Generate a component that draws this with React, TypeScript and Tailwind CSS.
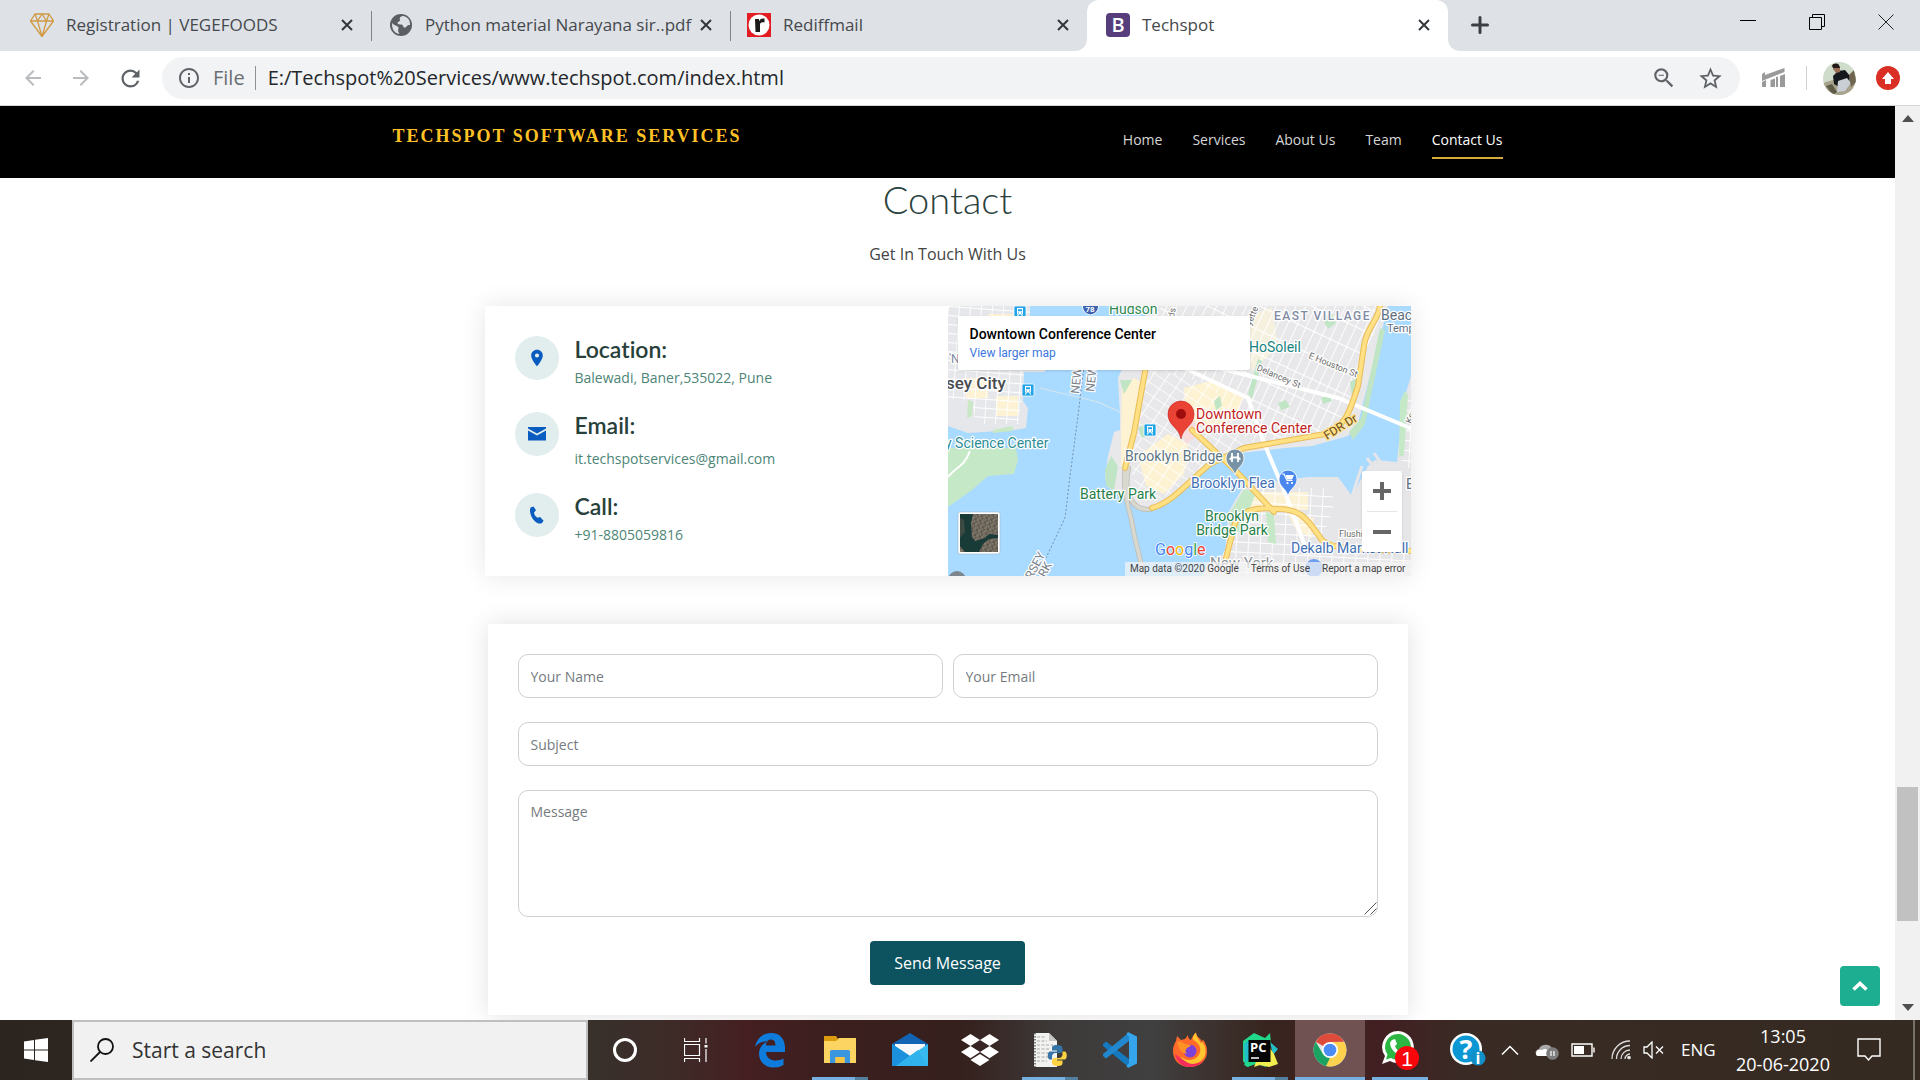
import type { ReactNode } from "react";
import {
  MdArrowBack,
  MdArrowForward,
  MdRefresh,
  MdInfoOutline,
  MdZoomOut,
  MdStarBorder,
  MdLocationOn,
} from "react-icons/md";
import { FaDropbox } from "react-icons/fa";

/* ---------- Browser chrome ---------- */

function DiamondIcon() {
  return (
    <svg viewBox="0 0 24 24" className="size-6 shrink-0" fill="none" stroke="#d09a45" strokeWidth="1.3" strokeLinejoin="round">
      <path d="M5 1h14l4.500 7L12 23.500.5 8z" />
      <path d="M.5 8h23M5 1l2.500 7L12 23.500 16.500 8 19 1M7.500 8 12 1l4.500 7" />
    </svg>
  );
}

function GlobeIcon() {
  return (
    <svg viewBox="0 0 24 24" className="size-6 shrink-0">
      <circle cx="12" cy="12" r="11" fill="#5b5f64" />
      <path d="M14 3c-3 .5-4 2-3 4 1 1.500-2 1-2.500 3 0 1.500 2 1.500 4 1.500 2.500.5 1 3 3 3 2.500 0 2-3 5.500-2.500C21.500 7 18 3.500 14 3zM3.200 10c2 2.500 4.500 2.500 6 4 1 1.500-.5 2.500 0 4.500.5 1 1 1.500 1.200 2.500C5 20.500 2.500 15 3.200 10z" fill="#dee1e6" />
    </svg>
  );
}

function RediffIcon() {
  return (
    <svg viewBox="0 0 24 24" className="size-6 shrink-0">
      <rect width="24" height="24" fill="#e31b23" />
      <circle cx="12" cy="12" r="10.500" fill="#fff" />
      <path d="M8 6h4v2.500C13 6 14.500 5 17.500 5.500v4C14 9 13 10 13 12v7H8.500z" fill="#1a1a1a" />
    </svg>
  );
}

function BootstrapIcon() {
  return (
    <span className="flex size-6 shrink-0 items-center justify-center rounded-[4px] bg-[#563d7c] text-[20px] font-semibold leading-6 text-white">
      B
    </span>
  );
}

function CloseIcon() {
  return (
    <svg viewBox="0 0 12 12" className="size-3" fill="none" stroke="#33373b" strokeWidth="2">
      <path d="M1 1l10 10M11 1L1 11" />
    </svg>
  );
}

function Tab({ icon, title, className, active = false }: { icon: ReactNode; title: string; className: string; active?: boolean }) {
  return (
    <div
      className={`relative flex h-full items-center pb-[2px] pr-3 ${className} ${active ? "rounded-t-xl bg-white pl-[19px]" : ""}`}
    >
      {icon}
      <button className="min-w-0 flex-1 truncate pl-3 text-left text-[17px] leading-6 text-[#45494d]">{title}</button>
      <button aria-label={`Close ${title}`} className="flex size-6 shrink-0 items-center justify-center">
        <CloseIcon />
      </button>
      {active && (
        <>
          <span className="absolute bottom-0 -left-3 size-3 bg-white">
            <span className="block size-3 rounded-br-xl bg-[#dee1e6]" />
          </span>
          <span className="absolute -right-3 bottom-0 size-3 bg-white">
            <span className="block size-3 rounded-bl-xl bg-[#dee1e6]" />
          </span>
        </>
      )}
    </div>
  );
}

function TabStrip() {
  return (
    <div className="flex h-[51px] shrink-0 items-center bg-[#dee1e6]">
      <Tab className="w-[371px] pl-[30px]" icon={<DiamondIcon />} title="Registration | VEGEFOODS" />
      <span className="h-[30px] w-px bg-[#808387]" />
      <Tab className="w-[358px] pl-[17px]" icon={<GlobeIcon />} title="Python material Narayana sir..pdf" />
      <span className="h-[30px] w-px bg-[#808387]" />
      <Tab className="w-[356px] pl-4" icon={<RediffIcon />} title="Rediffmail" />
      <Tab className="w-[361px]" icon={<BootstrapIcon />} title="Techspot" active />
      <button aria-label="New tab" className="ml-5 flex size-6 items-center justify-center pb-px">
        <svg viewBox="0 0 18 18" className="size-[18px]" stroke="#3c4043" strokeWidth="3" strokeLinecap="round">
          <path d="M9 1.500v15M1.500 9h15" />
        </svg>
      </button>
      <div className="ml-auto flex h-11 items-center self-start">
        <button aria-label="Minimize" className="flex w-[69px] justify-center">
          <svg viewBox="0 0 16 16" className="size-4" stroke="#000"><path d="M0 6.500h16" /></svg>
        </button>
        <button aria-label="Restore" className="flex w-[69px] justify-center">
          <svg viewBox="0 0 16 16" className="size-4" stroke="#000" fill="none">
            <path d="M.5 3.500h12v12H.5zM3.500 3V.5h12v12H13" />
          </svg>
        </button>
        <button aria-label="Close window" className="flex w-[69px] justify-center">
          <svg viewBox="0 0 16 16" className="size-4" stroke="#222"><path d="M.5.5l15 15M15.500.5l-15 15" /></svg>
        </button>
      </div>
    </div>
  );
}

function Avatar() {
  return (
    <svg viewBox="0 0 33 33" className="size-[33px]">
      <defs>
        <clipPath id="avatar"><circle cx="16.500" cy="16.500" r="16.500" /></clipPath>
      </defs>
      <g clipPath="url(#avatar)">
        <rect width="33" height="33" fill="#cfdccb" />
        <path d="M0 21l10-3 8 5 15-9v19H0z" fill="#a9a38d" />
        <path d="M10 14l5-5 7-1 5 6-1 8-8 4-7-4z" fill="#15181c" />
        <path d="M10 4l4-2 3 3 0 5-4 1-3-4z" fill="#9a6f56" />
        <path d="M9 4c1-3 5-3 7-1l1 3-7 0z" fill="#221a18" />
        <path d="M15 19l9-3 4 5-6 8-8 1z" fill="#c9cfd4" />
        <path d="M26 13l5-5 2 12-5 5z" fill="#6e6450" />
        <path d="M3 24l6-2 5 8-4 3z" fill="#5f5c47" />
      </g>
    </svg>
  );
}

function Toolbar() {
  return (
    <div className="flex h-[55px] shrink-0 items-center border-b border-[#d4d6d9] bg-white pl-[21px] pr-5">
      <div className="flex gap-6 pr-[18px] text-[#b9bbbe]">
        <button aria-label="Back"><MdArrowBack className="size-6" /></button>
        <button aria-label="Forward"><MdArrowForward className="size-6" /></button>
        <button aria-label="Reload" className="text-[#5f6368]"><MdRefresh className="size-[27px]" /></button>
      </div>
      <div className="flex h-[42px] min-w-0 flex-1 items-center rounded-full bg-[#f1f3f4] pl-[15px] pr-4 text-[20px]">
        <MdInfoOutline className="size-6 shrink-0 text-[#5f6368]" />
        <span className="pl-3 pr-[10px] text-[#6b6f73]">File</span>
        <span className="h-6 w-px bg-[#8d9094]" />
        <input
          aria-label="Address"
          defaultValue="E:/Techspot%20Services/www.techspot.com/index.html"
          className="min-w-0 flex-1 bg-transparent pl-3 text-[#24272b] outline-none"
        />
        <button aria-label="Zoom" className="text-[#5f6368]"><MdZoomOut className="size-[26px]" /></button>
        <button aria-label="Bookmark" className="ml-5 text-[#5f6368]"><MdStarBorder className="size-[27px]" /></button>
      </div>
      <button aria-label="Extension" className="ml-[22px]">
        <svg viewBox="0 0 24 20" className="h-5 w-6" fill="#9a9a9a">
          <path d="M0 6L3 4v3L22.500 0v4L0 13z" />
          <path d="M0 14l4-2v7H0zM8.500 12l4.500-1.500V19H8.500zM18 8l5-2v13h-5zM14 9l2-.5V19h-2z" />
        </svg>
      </button>
      <span className="ml-5 h-6 w-px bg-[#cfd1d4]" />
      <button aria-label="Profile" className="ml-4"><Avatar /></button>
      <button aria-label="Update available" className="ml-5">
        <svg viewBox="0 0 24 24" className="size-6">
          <circle cx="12" cy="12" r="12" fill="#d92f25" />
          <path d="M12 6l6 7h-3v5H9v-5H6z" fill="#fff" />
        </svg>
      </button>
    </div>
  );
}

/* ---------- Web page ---------- */

const navItems = ["Home", "Services", "About Us", "Team", "Contact Us"];

function SiteHeader() {
  return (
    <header className="h-[72px] shrink-0 bg-black">
      <div className="mx-auto flex max-w-[1110px] items-start justify-between">
        <a href="#home" className="pt-[18px] font-['Liberation_Serif',serif] text-[18px] font-bold leading-6 tracking-[2px] text-[#ffc226]">
          TECHSPOT SOFTWARE SERVICES
        </a>
        <nav className="flex gap-[30px] pt-[19px] text-[14px] leading-[30px]">
          {navItems.map((item) => (
            <a
              key={item}
              href="#contact"
              className={
                item === "Contact Us"
                  ? "border-b-2 border-[#d9a93a] pb-[2px] text-white"
                  : "border-b-2 border-transparent pb-[2px] text-[#d6d6d6]"
              }
            >
              {item}
            </a>
          ))}
        </nav>
      </div>
    </header>
  );
}

function EnvelopeIcon() {
  return (
    <svg viewBox="0 0 18 14" className="h-[14px] w-[18px]" fill="#0a5cc0">
      <path d="M0 0h18v1.500L9 6.500 0 1.500zM0 3.500l9 5 9-5V13.500H0z" />
    </svg>
  );
}

function PhoneIcon() {
  return (
    <svg viewBox="0 0 18 18" className="size-[18px]" fill="#0a5cc0">
      <path d="M2.500 1.500L5.500.5 8 4.200 6 6.500c.3 2.300 1.700 4.300 3.600 5.300l2.500-.8 3.500 3.800-1.800 2.400c-1.500.8-4 .4-6-1.200C4 13 2 8 2 4z" />
    </svg>
  );
}

function InfoRow({ icon, title, children, gap = "pt-[5px]" }: { icon: ReactNode; title: string; children: ReactNode; gap?: string }) {
  return (
    <div className="flex gap-4">
      <span className="flex size-11 shrink-0 items-center justify-center rounded-full bg-[#e1eeed] text-[#0a5cc0]">{icon}</span>
      <div>
        <h4 className="font-['Lato',sans-serif] text-[23px] font-semibold leading-[26px] text-[#28403a] [font-variant-ligatures:none]">{title}</h4>
        <p className={`text-[14px] leading-[21px] text-[#4d8577] ${gap}`}>{children}</p>
      </div>
    </div>
  );
}

function Transit({ x, y }: { x: number; y: number }) {
  return (
    <g transform={`translate(${x} ${y})`}>
      <rect width="12" height="12" rx="1.500" fill="#1fa4e8" stroke="#fff" strokeWidth=".8" />
      <path d="M3 2h6v6.500H3z" fill="#fff" />
      <path d="M4 3.300h4v2H4zM4 6.500h1v1H4zM7 6.500h1v1H7z" fill="#1fa4e8" />
      <path d="M3.300 10.500l1.200-2M8.700 10.500L7.500 8.500" fill="none" stroke="#fff" strokeWidth="1.100" />
    </g>
  );
}

function CityMap() {
  return (
    <svg viewBox="0 0 463 270" preserveAspectRatio="xMidYMid slice" className="absolute inset-0 size-full font-['Roboto',sans-serif]">
      <defs>
        <pattern id="gridJersey" width="11" height="9" patternUnits="userSpaceOnUse" patternTransform="rotate(4)">
          <path d="M0 0h11M0 0v9" stroke="#fff" strokeWidth="1.800" fill="none" />
        </pattern>
        <pattern id="gridVillage" width="9" height="22" patternUnits="userSpaceOnUse" patternTransform="rotate(25)">
          <path d="M0 0h9M0 0v22" stroke="#fff" strokeWidth="1.800" fill="none" />
        </pattern>
        <pattern id="gridDowntown" width="13" height="10" patternUnits="userSpaceOnUse" patternTransform="rotate(34)">
          <path d="M0 0h13M0 0v10" stroke="#fff" strokeWidth="1.700" fill="none" />
        </pattern>
        <pattern id="gridBrooklyn" width="12" height="10" patternUnits="userSpaceOnUse" patternTransform="rotate(3)">
          <path d="M0 0h12M0 0v10" stroke="#fff" strokeWidth="1.800" fill="none" />
        </pattern>
        <pattern id="stipple" width="5" height="5" patternUnits="userSpaceOnUse" patternTransform="rotate(20)">
          <path d="M0 1h2M3 3h1M1 4h1" stroke="#9a8f80" strokeWidth="1" />
          <path d="M3 1h2M0 3h1" stroke="#4a443c" strokeWidth="1" />
        </pattern>
      </defs>
      <rect width="463" height="270" fill="#a9daff" />

      {/* New Jersey shore */}
      <path d="M0 0H82V62H97V66H76L75 95 80 102 78 122 66 124 20 127 0 120z" fill="#e6e7ea" />
      <path d="M40 8h30v20H40zM18 72h22v20H18zM48 90h22v20H48z" fill="#fdf3d4" />
      <path d="M0 0H82V62H76L74 95 70 118 28 118 24 96 0 92z" fill="url(#gridJersey)" />
      <path d="M45 124l20-4v5l-20 2zM20 94l5 2-1 14-5 2z" fill="#c8e8c6" />
      <path d="M0 142H68L70 154 66 168 40 170 24 184 0 201z" fill="#c5e8c6" />
      <path d="M22 145C15 163 8 160 0 171" fill="none" stroke="#fff" strokeWidth="2" />

      {/* Manhattan */}
      <path d="M202 0H440L430 40 424 62 410 117 400 130 364 140 337 142 294 147 262 160 230 187 206 203 184 198 160 181 157 172 160 150 166 126 172 124 172 108 170 72z" fill="#e8e8ea" />
      <path d="M174 82l12-10 8 5-9 70-8 5-4 10 0-35zM236 82l30-8 30 14-8 24-25 10-25-8zM190 150l30-22 20 10-4 30-20 20-18-8z" fill="#fdf2d2" />
      <path d="M290 15l34-14 6 40-26 24z" fill="#f6f1df" />
      <path d="M212 0H436L412 66 400 110 374 130 300 136 262 78 204 62z" fill="url(#gridVillage)" />
      <path d="M196 60L262 78 300 136 262 156 228 184 204 198 186 180 182 150z" fill="url(#gridDowntown)" />
      <path d="M163 150l-6 14 1 16 8 4 4-24zM432 22l5 2-20 94-12 16-4-8 12-14zM172 74h12l-8 14zM266 95l6-5 2 10-6 4zM190 122l8-4 4 10-8 4zM330 97l8-3 4 7-9 3zM373 92l9-3 2 6-9 3zM402 76l8-4 2 14-8 4zM300 88l10-35 4 2-10 38zM374 12l10-5 4 10-8 6z" fill="#bfe5c5" />
      <path d="M230 122l16-8 6 14-14 10z" fill="#f6dcdc" />

      {/* Brooklyn */}
      <path d="M463 70L455 97 452 127 449 156 427 154 420 160 404 190 390 171 360 171 314 177 295 181 280 207 277 247 260 257 254 270H463z" fill="#e6e6e9" />
      <path d="M300 186h60v18h-60zM340 208l26 4-2 20-16-8z" fill="#fcf2d6" />
      <path d="M295 182h90v20l-12 34H463V270H258L280 240z" fill="url(#gridBrooklyn)" />
      <path d="M454 92h12v70h-12z" fill="url(#gridBrooklyn)" />
      <path d="M296 183l12 4-16 40-10-4 1-18zM318 206l8 2 2 30-8-2zM452 95l5-10 3 4-4 60-5 2z" fill="#c5e8c6" />
      <path d="M404 190l10-30M409 200l14-38M419 152l14 18M426 147l14 20" stroke="#e6e6e9" strokeWidth="3" />

      {/* Ferry route and state line */}
      <path d="M92 82L150 96 172 106" fill="none" stroke="#d6e6ee" strokeWidth="1.200" />
      <path d="M136 60L130 110 122 170 117 212 98 252" fill="none" stroke="#6f93ad" strokeWidth="1" strokeDasharray="2 2" />

      {/* Bridges and highways */}
      <path d="M177 162C174 190 182 200 186 228L196 270M181 160C174 190 186 206 204 203" fill="none" stroke="#bdbdb5" strokeWidth="5" />
      <path d="M177 162C174 190 182 200 186 228L196 270M181 160C174 190 186 206 204 203" fill="none" stroke="#d9d8cf" strokeWidth="3.500" />
      <path d="M232 60L300 92 316 137 340 194 357 240M262 60L390 92 467 124" fill="none" stroke="#fff" strokeWidth="4" />
      <g fill="none" strokeLinecap="round" strokeLinejoin="round">
        <path d="M198 60L186 127 177 162M204 202C225 196 240 176 262 158L296 142 377 128C398 120 402 105 410 80L416 40C418 22 430 15 432 0M244 124L287 164 326 206M277 256L287 217C295 203 310 201 330 203 355 203 360 215 374 234 384 244 420 244 463 245" stroke="#e9bc58" strokeWidth="6" />
        <path d="M198 60L186 127 177 162M204 202C225 196 240 176 262 158L296 142 377 128C398 120 402 105 410 80L416 40C418 22 430 15 432 0M244 124L287 164 326 206M277 256L287 217C295 203 310 201 330 203 355 203 360 215 374 234 384 244 420 244 463 245" stroke="#ffe083" strokeWidth="4" />
      </g>

      {/* Labels */}
      <g stroke="#fff" strokeWidth="2.500" strokeLinejoin="round" paintOrder="stroke">
        <g fontSize="14">
          <text x="161" y="8" fill="#2f8a52">Hudson</text>
          <text x="301" y="46" fill="#17837f">HoSoleil</text>
          <text x="-3" y="142" fill="#2c8d97">y Science Center</text>
          <text x="132" y="193" fill="#258048">Battery Park</text>
          <text x="177" y="155" fill="#5d7482">Brooklyn Bridge</text>
          <text x="243" y="182" fill="#3f6fb5">Brooklyn Flea</text>
          <text x="284" y="215" fill="#258048" textAnchor="middle">Brooklyn</text>
          <text x="284" y="229" fill="#258048" textAnchor="middle">Bridge Park</text>
          <text x="343" y="247" fill="#3f6fb5">Dekalb Market Hall</text>
          <text x="248" y="113" fill="#c0221d">Downtown</text>
          <text x="248" y="127" fill="#c0221d">Conference Center</text>
          <text x="433" y="14" fill="#5d6f80">Beac</text>
          <text x="458" y="183" fill="#5d6f80">B</text>
        </g>
        <text x="439" y="26" fill="#5d6f80" fontSize="11">Temp</text>
        <text x="326" y="14" fill="#7f8aa3" fontSize="12" fontWeight="500" letterSpacing="1.500">EAST VILLAGE</text>
        <text x="-2" y="83" fill="#484c50" fontSize="17" fontWeight="500">sey City</text>
        <text x="1" y="57" fill="#7f8aa3" fontSize="12">'N</text>
        <g fill="#6c6c6c" fontSize="9">
          <text transform="translate(360 52) rotate(22)">E Houston St</text>
          <text transform="translate(308 64) rotate(23)">Delancey St</text>
          <text transform="translate(303 20) rotate(-68)">yette</text>
          <text transform="translate(463 118) rotate(-68)">Kent</text>
          <text x="391" y="231">Flushi</text>
          <text transform="translate(226 12) rotate(-80)">ds</text>
        </g>
        <g fill="#7a828a" fontSize="12">
          <text transform="translate(131 88) rotate(-84)">NEW</text>
          <text transform="translate(146 86) rotate(-84)">NEW</text>
          <text transform="translate(84 274) rotate(-62)">RSEY</text>
          <text transform="translate(97 272) rotate(-62)">RK</text>
        </g>
        <text transform="translate(379 134) rotate(-32)" fill="#6a4a25" fontSize="12" stroke="#ffe083">FDR Dr</text>
        <text x="262" y="262" fill="#8c9196" fontSize="15">New York</text>
      </g>

      {/* Places */}
      <Transit x={66} y={0} />
      <Transit x={74} y={78} />
      <Transit x={196} y={118} />
      <path d="M135-4h15c2 8-2 12-7.500 13C137 8 133 4 135-4z" fill="#3d63b0" stroke="#fff" />
      <text x="142" y="6" fill="#fff" fontSize="8" fontWeight="700" textAnchor="middle">78</text>
      <path d="M287 169c-2-8-9-9-9-17a9 9 0 0 1 18 0c0 8-7 9-9 17z" fill="#7893a5" stroke="#fff" strokeWidth=".8" />
      <path d="M284 156v-9M290 156v-9M281.500 153q2.500 0 2.500-3M292.500 153q-2.500 0-2.500-3M284 151.500h6" fill="none" stroke="#fff" strokeWidth="1.800" />
      <path d="M340 190c-2-8-9-9-9-17a9 9 0 0 1 18 0c0 8-7 9-9 17z" fill="#4a87ee" stroke="#fff" strokeWidth=".8" />
      <path d="M334 168h2l3 6.500h5.500" fill="none" stroke="#fff" strokeWidth="1.200" />
      <path d="M337.500 169h8.500l-2 4.500h-4.800z" fill="#fff" />
      <circle cx="339.500" cy="177" r="1.100" fill="#fff" />
      <circle cx="344" cy="177" r="1.100" fill="#fff" />
      <circle cx="366" cy="262" r="9" fill="#6f9ff0" />
      <circle cx="9" cy="274" r="9" fill="#7d858c" />
      <path d="M233 133c-2-12-13-13-13-25a13 13 0 0 1 26 0c0 12-11 13-13 25z" fill="#ea4335" stroke="#c5221f" strokeWidth=".6" />
      <circle cx="233" cy="108" r="5" fill="#a00d0d" />

      <text x="207" y="249" fontSize="16" stroke="#fff" strokeWidth="1.500" paintOrder="stroke">
        <tspan fill="#4285f4">G</tspan><tspan fill="#ea4335">o</tspan><tspan fill="#f4b400">o</tspan><tspan fill="#4285f4">g</tspan><tspan fill="#34a853">l</tspan><tspan fill="#ea4335">e</tspan>
      </text>

      {/* Satellite thumbnail */}
      <rect x="10" y="206" width="42" height="42" rx="2" fill="#fff" stroke="#9db6c8" strokeWidth=".6" />
      <rect x="12" y="208" width="38" height="38" fill="#6d665b" />
      <rect x="12" y="208" width="38" height="38" fill="url(#stipple)" />
      <path d="M12 208h13l-2 9 1 14 3 4 10-3 4-4 9 1v3l-9 1-6 5-4 8H17l-5-6z" fill="#193b38" />
      <path d="M12 212l4 2 1 12-5 6z" fill="#3d4a42" />
    </svg>
  );
}

function MapPanel() {
  return (
    <div className="relative overflow-hidden font-['Roboto',sans-serif]">
      <CityMap />
      <div className="absolute left-[10px] top-[10px] h-[54px] w-[292px] rounded-[2px] bg-white px-3 pt-[10px] shadow">
        <p className="text-[14px] font-medium leading-4 text-black">Downtown Conference Center</p>
        <a href="#map" className="block pt-[3px] text-[12px] leading-4 text-[#3b78e0]">View larger map</a>
      </div>
      <div className="absolute bottom-6 right-[9px] flex w-10 flex-col items-center rounded-[2px] bg-white shadow">
        <button aria-label="Zoom in" className="flex h-10 w-full items-center justify-center">
          <svg viewBox="0 0 18 18" className="size-[18px]"><path d="M0 9h18M9 0v18" stroke="#666" strokeWidth="4" /></svg>
        </button>
        <span className="h-px w-[30px] bg-[#e6e6e6]" />
        <button aria-label="Zoom out" className="flex h-10 w-full items-center justify-center">
          <svg viewBox="0 0 18 18" className="size-[18px]"><path d="M0 9h18" stroke="#666" strokeWidth="4" /></svg>
        </button>
      </div>
      <div className="absolute bottom-0 right-0 flex h-[14px] gap-3 bg-[#f5f5f5]/70 px-[5px] text-[10px] leading-[14px] text-[#444]">
        <span>Map data ©2020 Google</span>
        <a href="#terms">Terms of Use</a>
        <a href="#report">Report a map error</a>
      </div>
    </div>
  );
}

const fieldClass =
  "w-full rounded-[10px] border border-[#ced1d4] bg-white px-3 text-[14px] text-[#444] outline-none placeholder:text-[#757b80]";

function ContactSection() {
  return (
    <main className="flex min-w-0 flex-1 flex-col items-center px-4">
      <h2 className="pt-px font-['Lato',sans-serif] text-[38px] font-light leading-10 text-[#2a423d]">Contact</h2>
      <p className="pt-[23px] text-[16px] leading-6 text-[#444]">Get In Touch With Us</p>

      <section className="mt-10 grid h-[270px] w-full max-w-[926px] grid-cols-2 shadow-[0_0_24px_rgba(0,0,0,0.10)]">
        <div className="flex flex-col gap-6 bg-white pl-[30px] pt-[30px]">
          <InfoRow icon={<MdLocationOn className="size-5" />} title="Location:">Balewadi, Baner,535022, Pune</InfoRow>
          <InfoRow icon={<EnvelopeIcon />} title="Email:" gap="pt-[10px]">it.techspotservices@gmail.com</InfoRow>
          <InfoRow icon={<PhoneIcon />} title="Call:">+91-8805059816</InfoRow>
        </div>
        <MapPanel />
      </section>

      <form className="mt-12 grid w-full max-w-[920px] grid-cols-2 gap-x-[10px] gap-y-6 bg-white p-[30px] shadow-[0_0_24px_rgba(0,0,0,0.12)]">
        <input aria-label="Your Name" placeholder="Your Name" className={`${fieldClass} h-11`} />
        <input aria-label="Your Email" type="email" placeholder="Your Email" className={`${fieldClass} h-11`} />
        <input aria-label="Subject" placeholder="Subject" className={`${fieldClass} col-span-2 h-11`} />
        <div className="relative col-span-2">
          <textarea aria-label="Message" placeholder="Message" className={`${fieldClass} block h-[127px] resize-none py-[10px] leading-[21px]`} />
          <svg viewBox="0 0 13 13" className="pointer-events-none absolute bottom-[2px] right-px size-[13px]" stroke="#555">
            <path d="M.5 12.500l12-12M6.500 12.500l6-6" />
          </svg>
        </div>
        <button type="button" className="col-span-2 h-11 justify-self-center rounded bg-[#0d535f] px-6 text-[16px] font-medium text-white">
          Send Message
        </button>
      </form>
    </main>
  );
}

function Scrollbar() {
  return (
    <div className="flex w-[25px] shrink-0 flex-col items-center bg-[#f1f1f1] py-[9px]">
      <svg viewBox="0 0 12 7" className="h-[7px] w-3" fill="#505050"><path d="M6 0l6 7H0z" /></svg>
      <div className="flex w-full flex-1 flex-col items-center">
        <div className="grow-[665]" />
        <div className="w-[21px] grow-[134] bg-[#c1c1c1]" />
        <div className="grow-[83]" />
      </div>
      <svg viewBox="0 0 12 7" className="h-[7px] w-3" fill="#505050"><path d="M0 0h12L6 7z" /></svg>
    </div>
  );
}

/* ---------- Taskbar ---------- */

function EdgeIcon() {
  return (
    <svg viewBox="0 0 32 36" className="h-9 w-8" fill="#0f7bdb">
      <path d="M1 15C3 6 9 1 17 1c9 0 14 6 14 15v4H12c0 6 5 8.500 10 8.500 3 0 5.500-.8 7.500-2V33c-3 1.700-6 2.500-9.500 2.500C11 35.500 5 30 5 21.500c0-6 4-10 9-12.500C8 9.500 4 11.500 1 15zm11-1.500h9.500c0-4-1.500-6-4.500-6s-5 2.500-5 6z" />
    </svg>
  );
}

function ExplorerIcon() {
  return (
    <svg viewBox="0 0 32 32" className="size-8">
      <path d="M0 2h12l2 3v5H0z" fill="#dc9c10" />
      <path d="M0 7h12l3-3h17v25H0z" fill="#fcd462" />
      <path d="M6 29V17.500Q6 16 7.500 16h17q1.500 0 1.500 1.500V29h-5.500v-6h-9v6z" fill="#3996df" />
      <path d="M11.500 23h9v6h-9z" fill="#f6c445" />
    </svg>
  );
}

function MailIcon() {
  return (
    <svg viewBox="0 0 36 36" className="size-9">
      <path d="M0 12L18 1l18 11v10H0z" fill="#1263b4" />
      <path d="M3 12h30v10L18 27 3 22z" fill="#f5f7fa" />
      <path d="M0 12l18 12L36 12v22H0z" fill="#38b9ef" />
      <path d="M0 12l18 12-14 10H0z" fill="#1b90dc" />
      <path d="M36 34H4l22-16z" fill="#30b3ec" />
    </svg>
  );
}

function PythonFileIcon() {
  return (
    <svg viewBox="0 0 34 36" className="h-9 w-[34px]">
      <path d="M1 1h15l8 8v26H1z" fill="#f2f2f0" />
      <path d="M16 1v8h8" fill="#c6c6c6" />
      <path d="M4 5h9M4 9h10M4 13h16M4 17h12M4 21h11M4 25h12M4 29h10" stroke="#a9a9a9" strokeDasharray="3 1.500" />
      <path d="M2 1v34" stroke="#333" strokeWidth="1.200" strokeDasharray="1.500 1.500" />
      <path d="M24 13c-4 0-5 1.200-5 3v2.500h6v1h-8c-3 0-3 8 0 8h2v-3c0-2 1.500-3.500 3.500-3.500h4.500c1.500 0 2.500-1 2.500-2.500V16c0-2-2-3-5.500-3z" fill="#3674a8" />
      <path d="M24.500 34c4 0 5-1.200 5-3v-2.500h-6v-1h8c3 0 3-8 0-8h-2v3c0 2-1.500 3.500-3.500 3.500h-4.500c-1.500 0-2.500 1-2.500 2.500V31c0 2 2 3 5.500 3z" fill="#ffd344" />
    </svg>
  );
}

function CodeIcon() {
  return (
    <svg viewBox="0 0 36 36" className="size-9">
      <path d="M1 12l3-2.500L27 27v8.500L1 14z" fill="#1479bd" />
      <path d="M1 24l3 2.500L27 9V.5L1 22z" fill="#2188cf" />
      <path d="M26 0l9 4.500v27L26 36l-1.500-2L27 31V5l-2.500-3z" fill="#35a5ee" />
    </svg>
  );
}

function FirefoxIcon() {
  return (
    <svg viewBox="0 0 36 36" className="size-9">
      <path d="M18 35C7 35 1 28 1 19c0-4 1-7 3-10l1-5 4 4 4-1 3-4c0 3 1 4 3 5 1-3 3-6 5-7.500 1 5 4 5 6 9l1-2c3 4 4 8 4 12 0 9-7 15.500-17 15.500z" fill="#ff6a2b" />
      <path d="M24 .5c-3 3-4 6-2 8 6 3 8 9 5 14-4 7-14 7-18 2 1 6 8 9 14 7 9-2 12-9 10-17l-3-5-1 2C27 7 24 5 24 .5z" fill="#ffc531" />
      <path d="M3 22c2 9 8 13 15 13 6 0 11-3 14-7-7 5-14 5-19 1-3-2-6-4-10-7z" fill="#f42c5e" />
      <circle cx="18" cy="19" r="6.500" fill="#7a42d8" />
      <path d="M5 10c3-1 6 0 8 2l6 1c-1 2-3 2-4 3-2 2-2 4 0 6-5-1-8-4-10-12z" fill="#ff9226" />
    </svg>
  );
}

function PyCharmIcon() {
  return (
    <svg viewBox="0 0 36 36" className="size-9">
      <path d="M1 9L12 1l11 5 5-5 1 10-5 24-10-3-9 3-4-6z" fill="#21d789" />
      <path d="M28 10l8 7-5 6zM2 12l5-4v20l-4 3z" fill="#23bfc9" />
      <path d="M24 10l8 12 4 10-9 3-9-2-6 2 4-10z" fill="#f3ee4f" />
      <path d="M5 29h8l-2 3-5 3-4-2z" fill="#21d789" />
      <rect x="6.500" y="8" width="22" height="22" fill="#050505" />
      <text x="8" y="20" fontSize="13" fontWeight="700" fill="#fff" fontFamily="Open Sans, sans-serif">PC</text>
      <path d="M9 26h8" stroke="#fff" strokeWidth="1.500" />
    </svg>
  );
}

function ChromeIcon() {
  return (
    <svg viewBox="0 0 34 34" className="size-[34px]">
      <circle cx="17" cy="17" r="16.500" fill="#e5e5e5" />
      <path d="M17 17L2.700 8.700A16.500 16.500 0 0 1 31.300 8.700L17 9z" fill="#de4b3b" />
      <path d="M17 9h14.300A16.500 16.500 0 0 1 17 33.500L24 21z" fill="#fdd14c" />
      <path d="M2.700 8.700L10 21l7 4-2 8.400A16.500 16.500 0 0 1 2.700 8.700z" fill="#1ca261" />
      <path d="M17 33.500L24 21l-7 4-4 8z" fill="#fdd14c" />
      <circle cx="17" cy="17" r="8" fill="#fff" />
      <circle cx="17" cy="17" r="6.300" fill="#4a8bf4" />
    </svg>
  );
}

function WhatsAppIcon() {
  return (
    <svg viewBox="0 0 38 40" className="h-10 w-[38px]">
      <path d="M17 1a16 16 0 1 1-8 30l-8 3 3-8A16 16 0 0 1 17 1z" fill="#fff" />
      <path d="M17 4a13 13 0 1 1-7 24l-5 1.500 1.500-5A13 13 0 0 1 17 4z" fill="#2cb742" />
      <path d="M11 10l3-1 2 5-2 2c1 3 3 5 6 6l2-2 4 2c0 3-3 4-6 3-6-1-10-6-11-11 0-2 1-3 2-4z" fill="#fff" />
      <circle cx="26" cy="28" r="12" fill="#f7060c" />
      <text x="26" y="36" fontSize="21" fill="#fff" textAnchor="middle" fontFamily="Liberation Sans, sans-serif">1</text>
    </svg>
  );
}

function HelpIcon() {
  return (
    <svg viewBox="0 0 36 36" className="size-9">
      <circle cx="16" cy="17" r="16" fill="#fff" />
      <circle cx="16" cy="17" r="13.500" fill="#0b96d4" />
      <text x="16" y="27" fontSize="27" fontWeight="700" fill="#fff" textAnchor="middle" fontFamily="Open Sans, sans-serif">?</text>
      <circle cx="28" cy="26" r="7.500" fill="#118fc9" />
      <text x="28" y="32" fontSize="16" fontWeight="700" fill="#fff" textAnchor="middle" fontFamily="Open Sans, sans-serif">i</text>
    </svg>
  );
}

const apps: { name: string; icon: ReactNode; state?: "open" | "stacked" | "active" }[] = [
  { name: "Edge", icon: <EdgeIcon /> },
  { name: "File Explorer", icon: <ExplorerIcon />, state: "stacked" },
  { name: "Mail", icon: <MailIcon /> },
  { name: "Dropbox", icon: <FaDropbox className="size-[38px] text-white" /> },
  { name: "IDLE", icon: <PythonFileIcon />, state: "stacked" },
  { name: "Visual Studio Code", icon: <CodeIcon /> },
  { name: "Firefox", icon: <FirefoxIcon /> },
  { name: "PyCharm", icon: <PyCharmIcon />, state: "stacked" },
  { name: "Chrome", icon: <ChromeIcon />, state: "active" },
  { name: "WhatsApp", icon: <WhatsAppIcon />, state: "open" },
];

function Taskbar() {
  return (
    <footer className="flex h-[60px] shrink-0 bg-[linear-gradient(90deg,#2b241f_0%,#38302b_31%,#3e2b28_35%,#451f22_39%,#3c1f1f_43%,#35201d_50%,#3d3a39_55%,#404040_60%,#38251f_66%,#421f22_72%,#3a2a25_76%,#372b23_82%,#352a22_100%)] text-white">
      <button aria-label="Start" className="flex w-[72px] shrink-0 items-center justify-center">
        <svg viewBox="0 0 24 24" className="size-6" fill="#fff">
          <path d="M0 3.500L10 2v9.500H0zM11 1.800L24 0v11.500H11zM0 12.500h10V22L0 20.500zM11 12.500h13V24l-13-1.800z" />
        </svg>
      </button>
      <label className="flex w-[516px] items-center border-2 border-[#bfbfbf] bg-[#f1f1f1] pl-4">
        <svg viewBox="0 0 24 24" className="size-6 shrink-0" fill="none" stroke="#111" strokeWidth="1.800">
          <circle cx="15.500" cy="8.500" r="7.500" /><path d="M10 14L.5 23.500" />
        </svg>
        <input aria-label="Search" placeholder="Start a search" className="ml-[18px] min-w-0 flex-1 bg-transparent pt-[2px] text-[21px] outline-none placeholder:text-[#333]" />
      </label>
      <button aria-label="Cortana" className="flex w-[73px] shrink-0 items-center justify-center">
        <span className="size-6 rounded-full border-[3px] border-white" />
      </button>
      <button aria-label="Task view" className="flex w-[74px] shrink-0 items-center justify-center pr-1">
        <svg viewBox="0 0 24 24" className="size-6" fill="none" stroke="#fff" strokeWidth="1.200">
          <path d="M.5 0v3.500h15V0M.5 6.500h15v11H.5zM.5 24v-3.500h15V24M22 0v5.500M22 11v13" />
          <rect x="20.500" y="7" width="3" height="2.500" fill="#fff" stroke="none" />
        </svg>
      </button>
      {apps.map((app) => (
        <button
          key={app.name}
          aria-label={app.name}
          className={`relative flex w-[70px] shrink-0 items-center justify-center ${app.state === "active" ? "bg-[#705252]" : ""}`}
        >
          {app.icon}
          {app.state === "active" && <span className="absolute inset-x-0 bottom-0 h-[3px] bg-[#76b0e0]" />}
          {app.state === "open" && <span className="absolute inset-x-[7px] bottom-0 h-[3px] bg-[#76b0e0]" />}
          {app.state === "stacked" && (
            <span className="absolute inset-x-[7px] bottom-0 flex h-[3px] bg-[#76b0e0]">
              <span className="ml-auto w-[13px] bg-[#54809f]" />
            </span>
          )}
        </button>
      ))}
      <button aria-label="Help" className="flex w-[66px] shrink-0 items-center justify-center">
        <HelpIcon />
      </button>
      <div className="flex flex-1 items-center whitespace-nowrap">
        <button aria-label="Show hidden icons">
          <svg viewBox="0 0 18 10" className="h-[10px] w-[18px]" fill="none" stroke="#fff" strokeWidth="1.500"><path d="M1 9.500l8-8 8 8" /></svg>
        </button>
        <svg viewBox="0 0 24 20" className="ml-4 h-5 w-6">
          <path d="M4 9a7 6 0 0 1 13-1c3 1 3 8-1 8H4C0 16-1 10 4 9z" fill="#a8a8a8" />
          <path d="M1 14c0-4 3-5 6-4 2-2 7-1 7 3v3H4q-3 0-3-2z" fill="#fff" />
          <circle cx="17.500" cy="13.500" r="6.300" fill="#7d7d7d" />
          <path d="M16 11v5M19 11v5" stroke="#fff" strokeWidth="1.200" />
        </svg>
        <svg viewBox="0 0 24 14" className="ml-3 h-[14px] w-6" fill="none" stroke="#fff" strokeWidth="1.400">
          <path d="M1 1h20v12H1zM23 4.500v5" /><path d="M3 3h10v8H3z" fill="#fff" stroke="none" />
        </svg>
        <svg viewBox="0 0 20 20" className="ml-4 size-5" fill="none" stroke="#ddd" strokeWidth="1.300">
          <path d="M1 19A18 18 0 0 1 19 1M5.500 19A13.500 13.500 0 0 1 19 5.500M10 19a9 9 0 0 1 9-9M14 19a5 5 0 0 1 5-5" />
          <circle cx="18" cy="17.500" r="1.200" fill="#fff" />
        </svg>
        <svg viewBox="0 0 22 18" className="ml-3 h-[18px] w-[22px]" fill="none" stroke="#fff" strokeWidth="1.300">
          <path d="M1 6h3l5-5v16l-5-5H1zM13 5.500l7 7M20 5.500l-7 7" />
        </svg>
        <button className="ml-4 w-[34px] text-center text-[17px]">ENG</button>
        <button className="ml-[18px] w-[100px] text-center text-[18px] leading-7">13:05<br />20-06-2020</button>
        <button aria-label="Notifications" className="ml-6">
          <svg viewBox="0 0 24 24" className="size-6" fill="none" stroke="#fff" strokeWidth="1.400">
            <path d="M1 1h22v17h-8l-3.500 4L8 18H1z" />
          </svg>
        </button>
        <span className="ml-auto h-full w-[7px] border-l-2 border-[#77716c]" />
      </div>
    </footer>
  );
}

export default function App() {
  return (
    <div className="flex h-screen flex-col overflow-hidden bg-white font-['Open_Sans',sans-serif]">
      <TabStrip />
      <Toolbar />
      <div className="flex min-h-0 flex-1">
        <div className="relative flex min-w-0 flex-1 flex-col overflow-hidden">
          <SiteHeader />
          <ContactSection />
          <a
            href="#top"
            aria-label="Back to top"
            className="absolute bottom-[14px] right-[15px] flex size-10 items-center justify-center rounded bg-[#1dad90]"
          >
            <svg viewBox="0 0 16 10" className="h-[10px] w-4" fill="none" stroke="#fff" strokeWidth="3.500"><path d="M1.500 8.500L8 2.500l6.500 6" /></svg>
          </a>
        </div>
        <Scrollbar />
      </div>
      <Taskbar />
    </div>
  );
}
